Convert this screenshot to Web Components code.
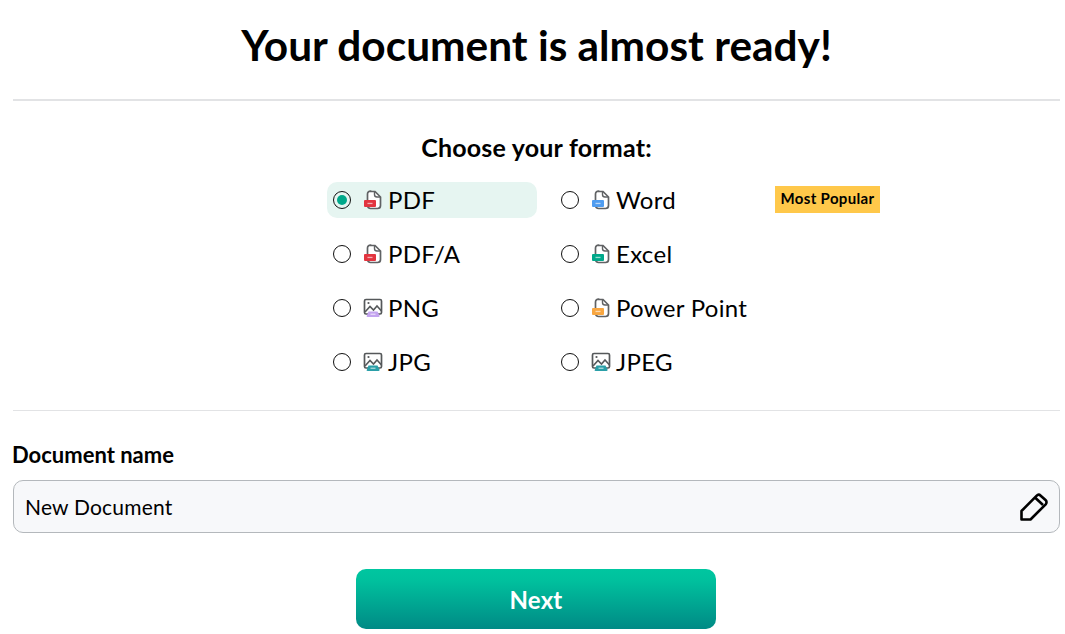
<!DOCTYPE html>
<html lang="en">
<head>
<meta charset="utf-8">
<title>Your document is almost ready!</title>
<style>
    html, body { margin: 0; padding: 0; background: #fff; }
    body { font-family: Lato, "Liberation Sans", sans-serif; color: #000; }
</style>
</head>
<body>
<doc-page>
    <format-picker title="Choose your format:"></format-picker>
    <name-field label="Document name" value="New Document"></name-field>
</doc-page>

<script>
const TMP_PAGE = document.createElement('template');
TMP_PAGE.innerHTML = `
    <style>
        :host {
            display: block;
            box-sizing: border-box;
            height: 634px;
            padding: 0 5px 0 13px;
        }
        h1 {
            margin: 0;
            height: 101px;
            display: flex;
            align-items: center;
            justify-content: center;
            padding-bottom: 11px;
            box-sizing: border-box;
            font-size: 42.4px;
            font-weight: 700;
            border-bottom: 2px solid #e2e3e5;
        }
        button {
            display: block;
            width: 360px;
            height: 60px;
            margin: 36px 0 0 343px;
            border: 0;
            border-radius: 10px;
            background: linear-gradient(#00c6a0, #00c09d 20%, #008a85);
            color: #fff;
            font: 700 24px Lato, "Liberation Sans", sans-serif;
            letter-spacing: .2px;
        }
    </style>
    <h1>Your document is almost ready!</h1>
    <slot></slot>
    <button type="button">Next</button>`;

class DocPage extends HTMLElement {
    constructor() {
        super();
        this.attachShadow({mode: 'open'});
        this.shadowRoot.append(TMP_PAGE.content.cloneNode(true));
    }
}

// small file and picture icons, the tag colour is the only difference
function fileIcon(color) {
    return `<svg width="20" height="20" viewBox="0 0 20 20" fill="none">
        <path d="M7.5 1.500h4.500l5.500 5.500v8.500a3 3 0 0 1-3 3h-7a3 3 0 0 1-3-3v-11.500a3 3 0 0 1 3-3z" stroke="#606264" stroke-width="1.700" fill="#fff"/>
        <path d="M11.500 2v2.500a2.500 2.500 0 0 0 2.500 2.500h3" stroke="#606264" stroke-width="1.400"/>
        <rect x="1" y="10" width="12" height="7" rx="1" fill="${color}"/>
        <rect x="4.500" y="12.800" width="5" height="1.300" fill="#fff" opacity=".6"/>
    </svg>`;
}

function imageIcon(color) {
    return `<svg width="20" height="20" viewBox="0 0 20 20" fill="none">
        <rect x="1.500" y="1.500" width="17" height="14.500" rx="1.500" stroke="#55585a" stroke-width="1.700" fill="#fff"/>
        <circle cx="5.500" cy="5" r="1.100" fill="#55585a"/>
        <path d="M2 14l5-5.500 3.500 3.500 3.500-4 4.500 5" stroke="#55585a" stroke-width="1.600"/>
        <path d="M3.500 18.500l2-5h9l2 4a1 1 0 0 1-1 1.500h-11z" fill="${color}"/>
        <rect x="7.500" y="15.600" width="5" height="1.300" fill="#fff" opacity=".6"/>
    </svg>`;
}

const TMP_OPTION = document.createElement('template');
TMP_OPTION.innerHTML = `
    <style>
        :host {
            display: flex;
            align-items: center;
            box-sizing: border-box;
            height: 36px;
            padding-left: 6px;
            border-radius: 10px;
            font-size: 24px;
            letter-spacing: .3px;
            cursor: pointer;
        }
        :host([selected]) {
            background: #e6f5f1;
        }
        .radio {
            box-sizing: border-box;
            width: 18px;
            height: 18px;
            border: 1.5px solid #111;
            border-radius: 50%;
            flex: none;
            display: flex;
            align-items: center;
            justify-content: center;
        }
        :host([selected]) .radio::after {
            content: '';
            width: 10px;
            height: 10px;
            border-radius: 50%;
            background: #00a88a;
        }
        .icon {
            display: flex;
            margin: 0 5px 0 12px;
            flex: none;
        }
        .label {
            margin-bottom: 1px;
        }
    </style>
    <span class="radio"></span>
    <span class="icon"></span>
    <span class="label"><slot></slot></span>`;

class FormatOption extends HTMLElement {
    constructor() {
        super();
        this.attachShadow({mode: 'open'});
        this.shadowRoot.append(TMP_OPTION.content.cloneNode(true));
    }

    connectedCallback() {
        const color = this.getAttribute('color');
        const draw = this.getAttribute('kind') === 'image' ? imageIcon : fileIcon;
        this.shadowRoot.querySelector('.icon').innerHTML = draw(color);
    }
}

const TMP_PICKER = document.createElement('template');
TMP_PICKER.innerHTML = `
    <style>
        :host {
            display: block;
            box-sizing: border-box;
            height: 310px;
            border-bottom: 1px solid #e2e3e5;
        }
        h2 {
            margin: 0;
            padding-top: 31px;
            height: 81px;
            box-sizing: border-box;
            text-align: center;
            font-size: 25px;
            line-height: 30px;
            letter-spacing: .2px;
            font-weight: 700;
        }
        .grid {
            display: grid;
            grid-template-columns: 210px 210px;
            grid-auto-rows: 36px;
            column-gap: 18px;
            row-gap: 18px;
            margin-left: 314px;
            position: relative;
            width: 438px;
        }
        .badge {
            position: absolute;
            left: 448px;
            top: 4px;
            width: 105px;
            height: 27px;
            background: #ffc84a;
            font-size: 15px;
            font-weight: 700;
            letter-spacing: .35px;
            line-height: 25px;
            text-align: center;
        }
    </style>
    <h2></h2>
    <div class="grid">
        <format-option selected color="#e2343f">PDF</format-option>
        <format-option color="#4f9cf0">Word</format-option>
        <format-option color="#e2343f">PDF/A</format-option>
        <format-option color="#00a88a">Excel</format-option>
        <format-option kind="image" color="#c4a4f0">PNG</format-option>
        <format-option color="#f8a640">Power Point</format-option>
        <format-option kind="image" color="#2a9fa8">JPG</format-option>
        <format-option kind="image" color="#2a9fa8">JPEG</format-option>
        <span class="badge">Most Popular</span>
    </div>`;

class FormatPicker extends HTMLElement {
    constructor() {
        super();
        this.attachShadow({mode: 'open'});
        this.shadowRoot.append(TMP_PICKER.content.cloneNode(true));
    }

    connectedCallback() {
        this.shadowRoot.querySelector('h2').textContent = this.getAttribute('title');
    }
}

const TMP_FIELD = document.createElement('template');
TMP_FIELD.innerHTML = `
    <style>
        :host {
            display: block;
            padding-top: 31px;
        }
        label {
            display: block;
            font-size: 22px;
            line-height: 26px;
            font-weight: 700;
            margin: 0 0 12px -1px;
        }
        .box {
            box-sizing: border-box;
            height: 53px;
            display: flex;
            align-items: center;
            justify-content: space-between;
            padding: 0 10px 0 11px;
            background: #f7f8fa;
            border: 1px solid #b4b8bc;
            border-radius: 10px;
            font-size: 21px;
            letter-spacing: .2px;
        }
        .text { margin-bottom: 1px; }
        svg { display: block; }
    </style>
    <label></label>
    <div class="box">
        <span class="text"></span>
        <svg width="30" height="30" viewBox="0 0 30 30" fill="none" stroke="#000" stroke-width="2.600" stroke-linejoin="round">
            <path d="M2.500 19L17.500 3.800a3 3 0 0 1 4.200-.1l4.800 4.300a3 3 0 0 1 .2 4.300L11.500 27.500h-9z"/>
            <path d="M16 5.500l8 7.500"/>
        </svg>
    </div>`;

class NameField extends HTMLElement {
    constructor() {
        super();
        this.attachShadow({mode: 'open'});
        this.shadowRoot.append(TMP_FIELD.content.cloneNode(true));
    }

    connectedCallback() {
        this.shadowRoot.querySelector('label').textContent = this.getAttribute('label');
        this.shadowRoot.querySelector('.text').textContent = this.getAttribute('value');
    }
}

customElements.define('format-option', FormatOption);
customElements.define('format-picker', FormatPicker);
customElements.define('name-field', NameField);
customElements.define('doc-page', DocPage);
</script>
</body>
</html>
